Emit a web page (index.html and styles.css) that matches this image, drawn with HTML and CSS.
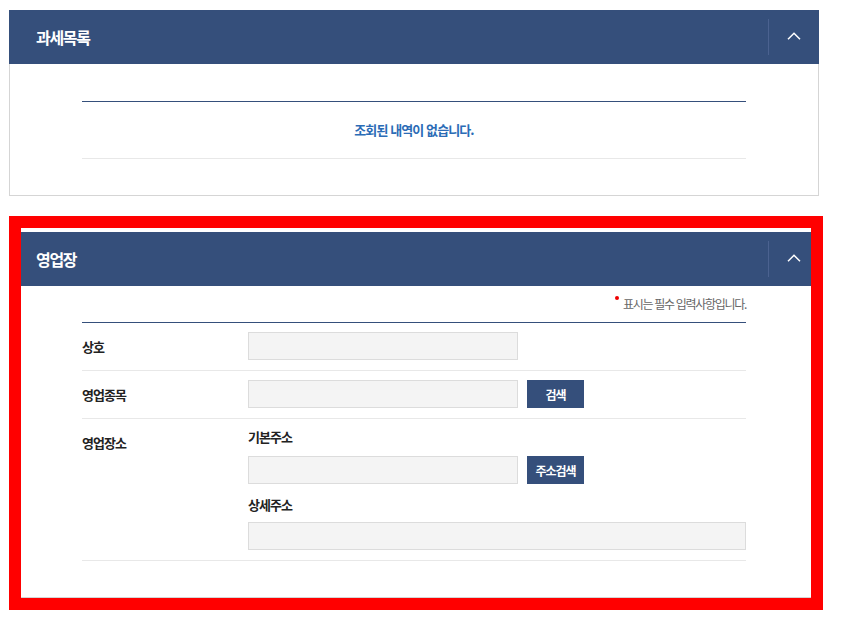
FILE: index.html
```html
<!DOCTYPE html>
<html lang="ko">
<head>
    <meta charset="UTF-8">
    <title>영업장 정보</title>
    <link rel="stylesheet" href="styles.css">
</head>
<body>
    <div class="wrap">
        <section class="panel">
            <div class="panel-head">
                <h2>과세목록</h2>
                <button class="toggle" type="button" aria-label="접기">
                    <svg width="14" height="8" viewBox="0 0 14 8"><path d="M1 7.2 L7 1.2 L13 7.2" fill="none" stroke="#fff" stroke-width="1.5"/></svg>
                </button>
            </div>
            <div class="panel-body">
                <div class="list">
                    <p class="empty">조회된 내역이 없습니다.</p>
                </div>
            </div>
        </section>

        <section class="panel panel-focus">
            <div class="panel-head">
                <h2>영업장</h2>
                <button class="toggle" type="button" aria-label="접기">
                    <svg width="14" height="8" viewBox="0 0 14 8"><path d="M1 7.2 L7 1.2 L13 7.2" fill="none" stroke="#fff" stroke-width="1.5"/></svg>
                </button>
            </div>
            <div class="panel-body form-body">
                <p class="required-note"><span class="dot"></span>표시는 필수 입력사항입니다.</p>
                <div class="form">
                    <div class="row">
                        <label class="label">상호</label>
                        <div class="field">
                            <input class="input" type="text">
                        </div>
                    </div>
                    <div class="row">
                        <label class="label">영업종목</label>
                        <div class="field">
                            <input class="input" type="text">
                            <button class="btn" type="button">검색</button>
                        </div>
                    </div>
                    <div class="row row-top">
                        <label class="label">영업장소</label>
                        <div class="field field-stack">
                            <span class="sub-label">기본주소</span>
                            <div class="inline">
                                <input class="input" type="text">
                                <button class="btn" type="button">주소검색</button>
                            </div>
                            <span class="sub-label">상세주소</span>
                            <input class="input input-wide" type="text">
                        </div>
                    </div>
                </div>
            </div>
        </section>
    </div>
</body>
</html>
```

FILE: styles.css
```css
body {
    margin: 0;
    background-color: #fff;
    font-family: "Noto Sans CJK KR", "Noto Sans", sans-serif;
    color: #222;
}

.wrap {
    width: 810px;
    padding: 10px 0 30px 9px;
}

.panel + .panel {
    margin-top: 36px;
}

.panel-head {
    display: flex;
    align-items: center;
    height: 54px;
    background-color: #354f7b;
}

.panel-head h2 {
    flex: 1;
    margin: 0;
    padding-left: 27px;
    color: #fff;
    font-size: 16px;
    font-weight: bold;
    letter-spacing: -1.3px;
}

.toggle {
    display: flex;
    align-items: center;
    justify-content: center;
    width: 51px;
    height: 36px;
    padding: 0 0 2px;
    border: none;
    border-left: 1px solid #4b6290;
    background: none;
    cursor: pointer;
}

.panel-body {
    border: 1px solid #d5d5d5;
    border-top: none;
    padding: 37px 72px 36px;
}

.list {
    border-top: 1px solid #354f7b;
    border-bottom: 1px solid #e8e8e8;
}

.empty {
    margin: 0;
    padding: 19px 0;
    line-height: 18px;
    text-align: center;
    color: #2b6cb6;
    font-size: 13px;
    font-weight: bold;
    letter-spacing: -0.9px;
}

/* red highlight box around the business section */
.panel-focus {
    position: relative;
}

.panel-focus::after {
    content: "";
    position: absolute;
    top: -16px;
    left: 0;
    right: -4px;
    bottom: -12px;
    border: 12px solid #ff0000;
    pointer-events: none;
}

.form-body {
    padding-top: 10px;
    padding-bottom: 36px;
}

.required-note {
    margin: 0 0 10px;
    line-height: 16px;
    text-align: right;
    color: #666;
    font-size: 12px;
    letter-spacing: -1.3px;
}

.dot {
    display: inline-block;
    width: 4px;
    height: 4px;
    margin-right: 4px;
    border-radius: 50%;
    background-color: #e00;
    vertical-align: 9px;
}

.form {
    border-top: 1px solid #354f7b;
}

.row {
    display: flex;
    align-items: center;
    padding: 9px 0 10px;
    border-bottom: 1px solid #e8e8e8;
}

.row-top {
    align-items: flex-start;
}

.label {
    width: 166px;
    flex-shrink: 0;
    font-size: 13px;
    font-weight: bold;
    letter-spacing: -1px;
    color: #222;
}

.row-top .label {
    line-height: 30px;
}

.field {
    display: flex;
    align-items: center;
    flex: 1;
}

.field-stack {
    flex-direction: column;
    align-items: flex-start;
}

.sub-label {
    margin-bottom: 10px;
    line-height: 18px;
    font-size: 13px;
    font-weight: bold;
    letter-spacing: -1px;
    color: #222;
}

.field-stack .input-wide {
    margin-top: -2px;
}

.inline {
    display: flex;
    align-items: center;
    margin-bottom: 12px;
}

.input {
    box-sizing: border-box;
    width: 270px;
    height: 28px;
    margin: 0;
    border: 1px solid #dcdcdc;
    background-color: #f4f4f4;
}

.input-wide {
    width: 100%;
}

.btn {
    width: 57px;
    height: 28px;
    margin-left: 9px;
    padding: 0;
    border: none;
    background-color: #354f7b;
    color: #fff;
    font-family: inherit;
    font-size: 12px;
    font-weight: bold;
    letter-spacing: -1px;
    cursor: pointer;
}
```
